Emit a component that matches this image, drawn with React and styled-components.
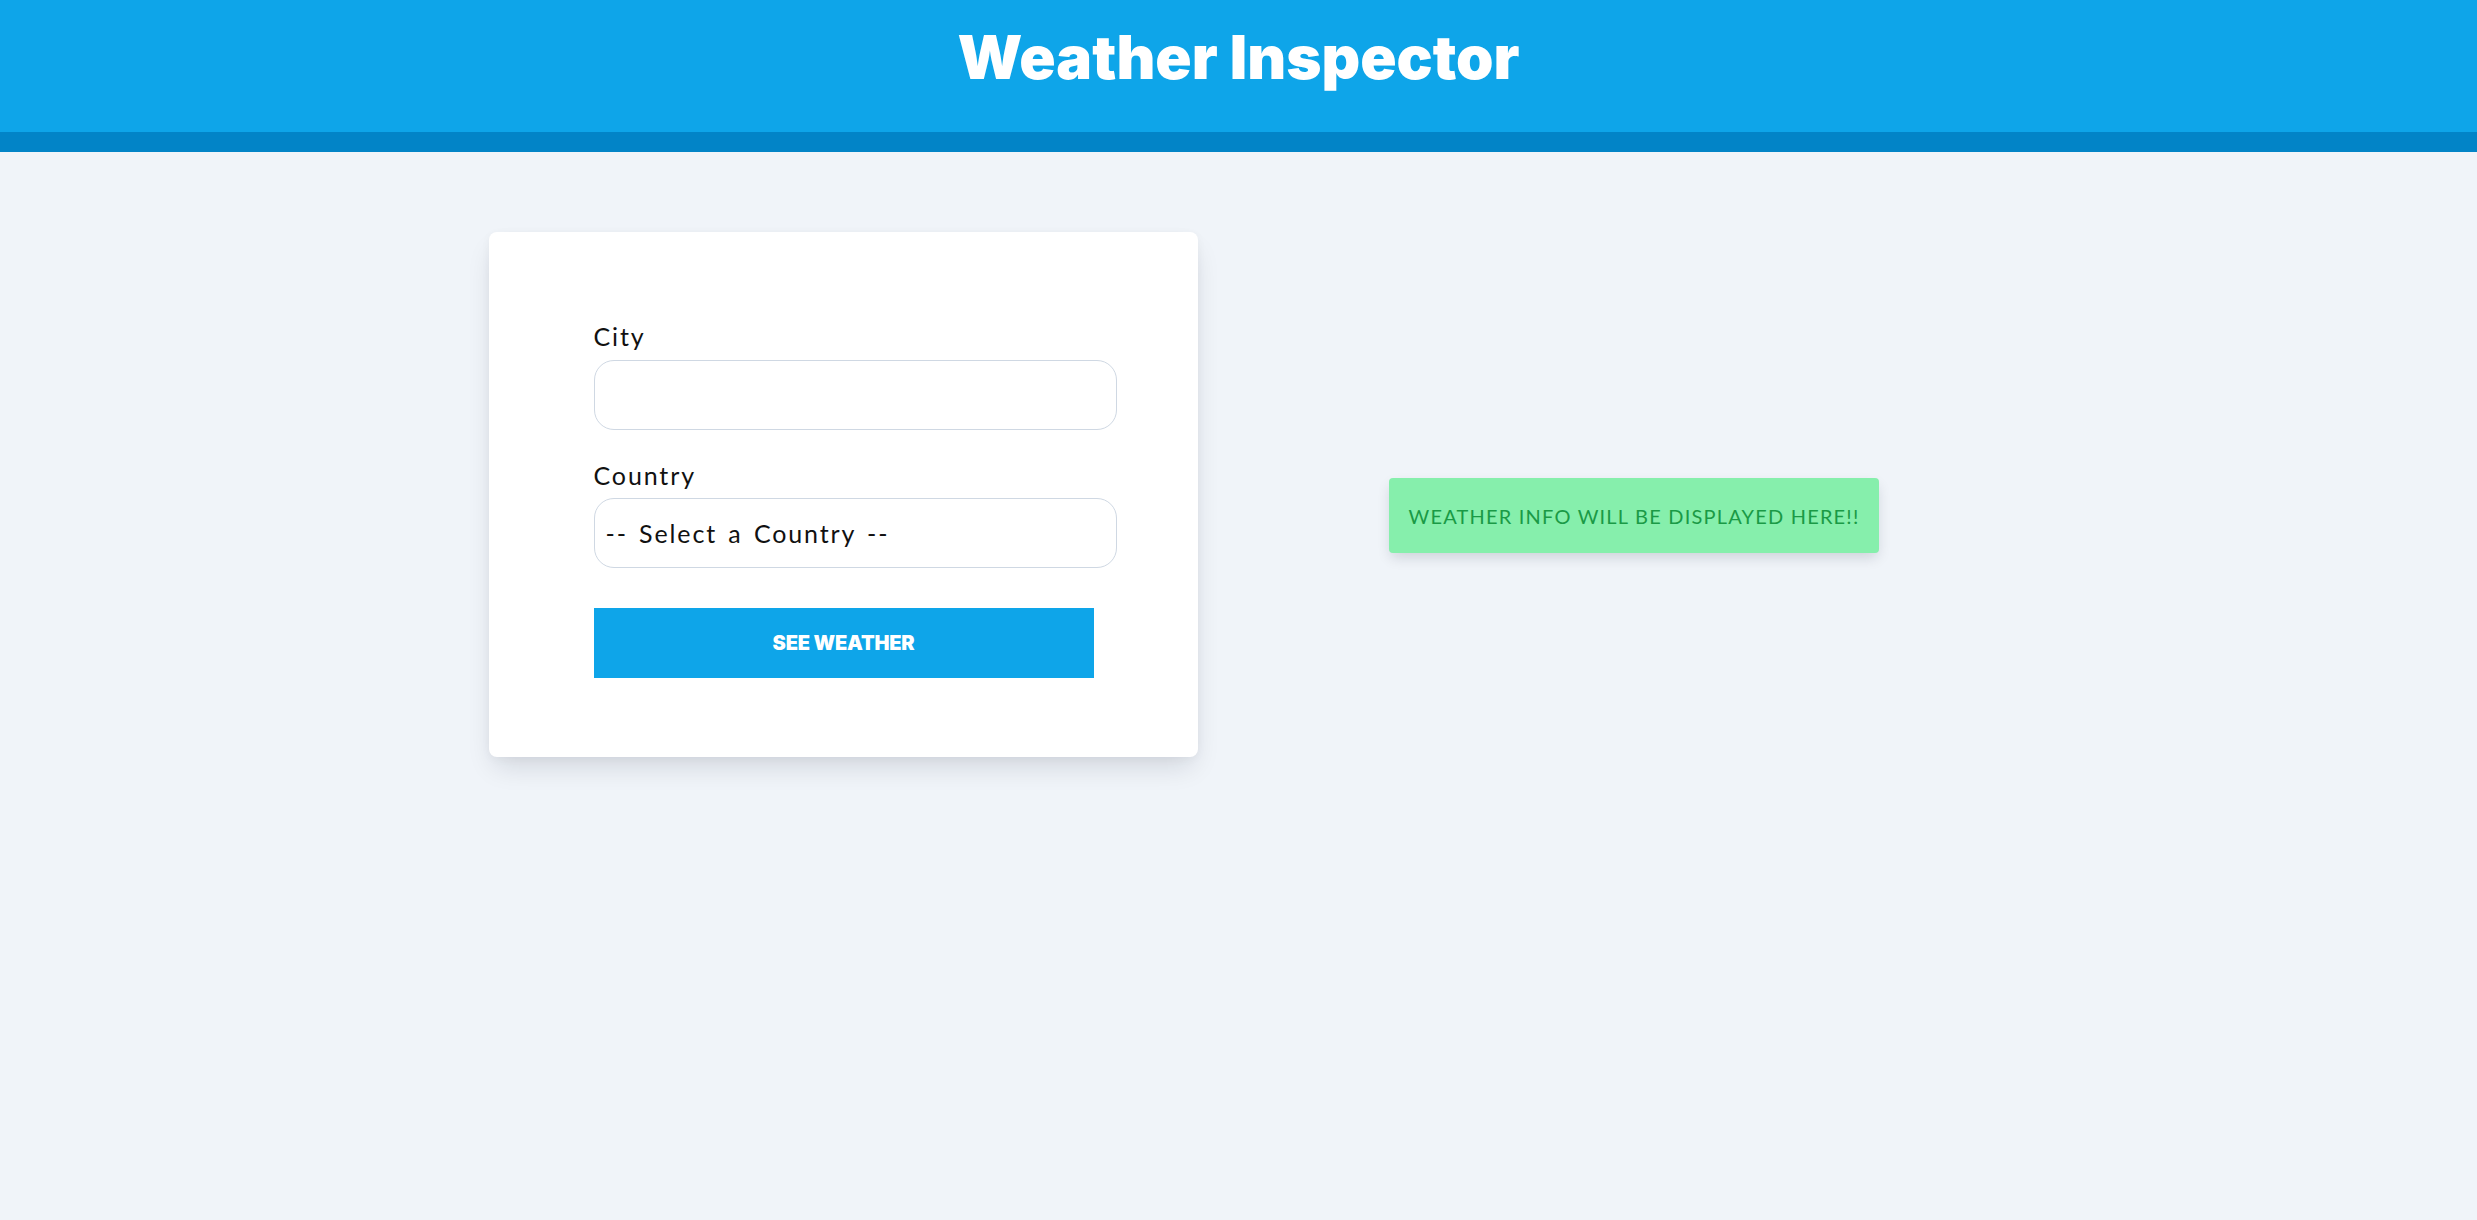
import React from "react";
import styled, { createGlobalStyle } from "styled-components";

const GlobalStyle = createGlobalStyle`
  * { box-sizing: border-box; }
  html, body { margin: 0; padding: 0; }
  body {
    background: #f0f4f9;
    font-family: Lato, "Open Sans", sans-serif;
    color: #111;
    min-height: 1220px;
  }
`;

const Header = styled.header`
  height: 152px;
  background: #0ea5e9;
  border-bottom: 20px solid #0284c7;
  padding-top: 27px;
  display: flex;
  justify-content: center;
`;

const Title = styled.h1`
  margin: 0;
  font-family: Inter, sans-serif;
  font-weight: 900;
  font-size: 60px;
  line-height: 1;
  letter-spacing: 0;
  color: #fff;
`;

const Main = styled.main`
  width: 1582px;
  margin: 0 auto;
  display: grid;
  grid-template-columns: 1fr 1fr;
  align-items: start;
  padding-top: 80px;
`;

const Column = styled.div`
  display: flex;
  justify-content: center;
  padding-top: ${(p) => p.$offset || 0}px;
`;

const Card = styled.form`
  width: 709px;
  background: #fff;
  border-radius: 8px;
  padding: 89px 105px 79px;
  box-shadow: 0 14px 28px -6px rgba(15, 23, 42, 0.14), 0 2px 10px rgba(15, 23, 42, 0.04);
  display: flex;
  flex-direction: column;
`;

const Label = styled.label`
  display: block;
  font-family: Lato, sans-serif;
  font-weight: 400;
  font-size: 25px;
  line-height: 30px;
  letter-spacing: 0.075em;
  color: #111;
  margin-top: ${(p) => p.$top || 0}px;
`;

const fieldStyles = `
  width: 523px;
  height: 70px;
  margin-top: 9px;
  border: 1px solid #cfd8e3;
  border-radius: 20px;
  background: #fff;
  padding: 0 11px;
  font-family: Lato, sans-serif;
  font-size: 25px;
  letter-spacing: 0.075em;
  word-spacing: 3px;
  color: #111;
  outline: none;
`;

const TextInput = styled.input`
  ${fieldStyles}
`;

const Select = styled.select`
  ${fieldStyles}
  margin-top: 8px;
  appearance: none;
  -webkit-appearance: none;
`;

const Button = styled.button`
  width: 500px;
  height: 70px;
  margin-top: 40px;
  border: none;
  background: #0ea5e9;
  color: #fff;
  font-family: Inter, sans-serif;
  font-weight: 900;
  font-size: 20px;
  letter-spacing: -0.01em;
  text-transform: uppercase;
  cursor: pointer;
`;

const InfoBox = styled.div`
  width: 490px;
  height: 75px;
  background: #86efac;
  border-radius: 4px;
  box-shadow: 0 6px 14px -2px rgba(15, 23, 42, 0.16);
  display: flex;
  align-items: center;
  justify-content: center;
  font-family: Lato, sans-serif;
  font-size: 20px;
  letter-spacing: 0.06em;
  color: #1a9a46;
  text-transform: uppercase;
`;

export default function App() {
  return (
    <>
      <GlobalStyle />
      <Header>
        <Title>Weather Inspector</Title>
      </Header>
      <Main>
        <Column>
          <Card onSubmit={(e) => e.preventDefault()}>
            <Label htmlFor="city">City</Label>
            <TextInput id="city" type="text" />
            <Label htmlFor="country" $top={30}>Country</Label>
            <Select id="country" defaultValue="">
              <option value="">-- Select a Country --</option>
            </Select>
            <Button type="submit">See Weather</Button>
          </Card>
        </Column>
        <Column $offset={246}>
          <InfoBox>Weather info will be displayed here!!</InfoBox>
        </Column>
      </Main>
    </>
  );
}
